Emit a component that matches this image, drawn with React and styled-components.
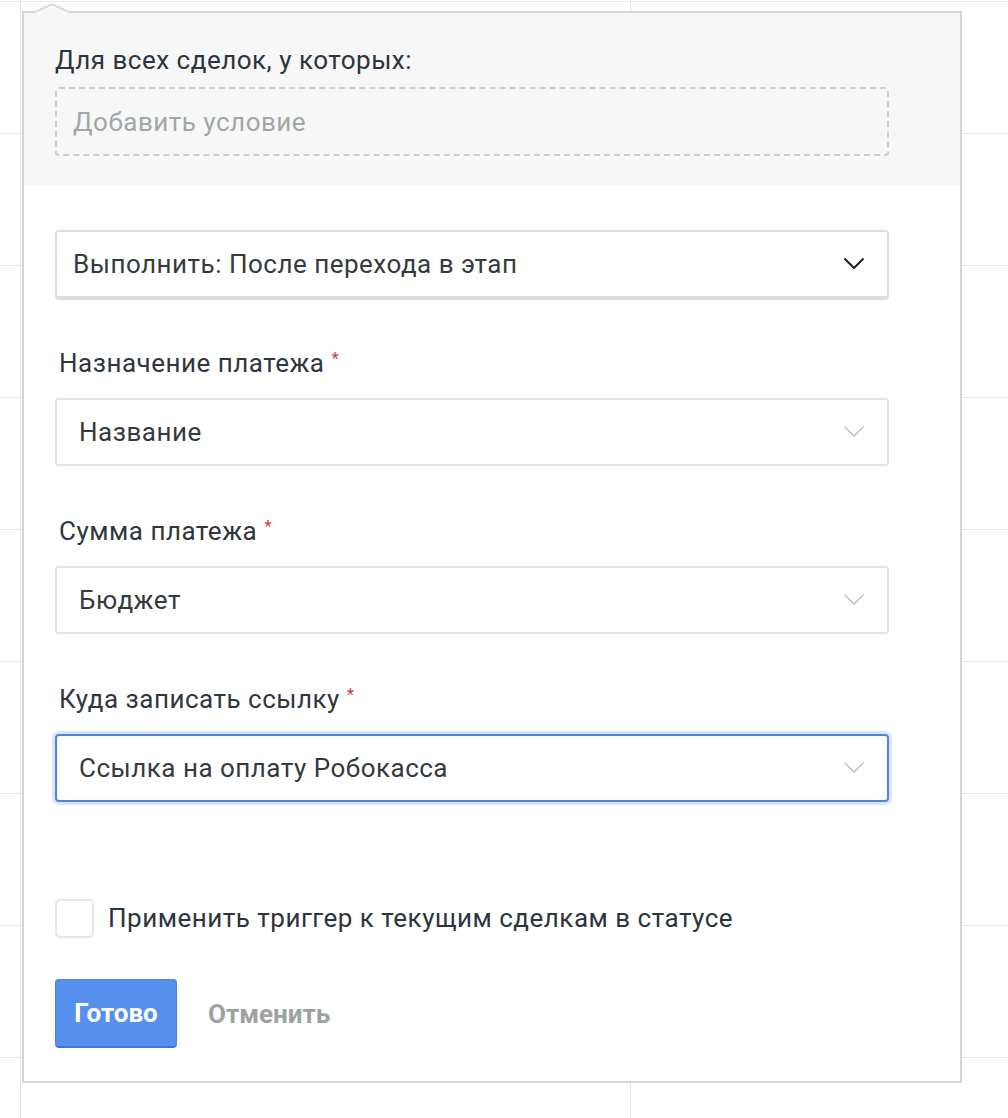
import React from 'react';
import styled, { createGlobalStyle } from 'styled-components';

const GlobalStyle = createGlobalStyle`
  html, body {
    margin: 0;
    padding: 0;
    background: #ffffff;
  }
  body {
    font-family: Roboto, "Noto Sans", sans-serif;
    color: #2f363e;
  }
`;

const Page = styled.div`
  position: relative;
  width: 1008px;
  height: 1118px;
  overflow: hidden;
`;

const Board = styled.div`
  display: grid;
  grid-template-columns: 21px 610px 1fr;
  grid-auto-rows: 132px;
  padding-top: 1px;
`;

const Cell = styled.div`
  border-top: 1px solid #e8e8e8;
  border-right: 1px solid #e4e4e4;

  &:nth-child(3n) {
    border-right: none;
  }
`;

const Popup = styled.div`
  position: absolute;
  left: 22px;
  top: 11px;
  width: 940px;
  box-sizing: border-box;
  border: 2px solid #d2d7d6;
  background: #ffffff;
  letter-spacing: 0.5px;
`;

const Notch = styled.svg`
  position: absolute;
  left: 11px;
  top: -10px;
  display: block;
`;

const Header = styled.div`
  background: #f7f7f7;
  padding: 31px 71px 30px 31px;
`;

const Title = styled.div`
  font-size: 26px;
  line-height: 32px;
  color: #2c343d;
`;

const ConditionBox = styled.div`
  margin-top: 11px;
  height: 69px;
  box-sizing: border-box;
  border: 2px dashed #cdcdcd;
  border-radius: 4px;
  display: flex;
  align-items: center;
  padding-left: 16px;
  font-size: 26px;
  color: #a0a7a8;
`;

const Body = styled.div`
  padding: 44px 71px 33px 31px;
`;

const SelectBox = styled.div`
  height: 68px;
  box-sizing: border-box;
  border: 2px solid ${(p) => (p.$focused ? '#4f82e2' : p.$action ? '#dedede' : '#e2e2e6')};
  border-radius: 4px;
  box-shadow: ${(p) =>
    p.$focused ? '0 0 0 3px #dce7fa' : p.$action ? '0 2px 0 #dedede' : 'none'};
  margin-bottom: ${(p) => (p.$action ? '4px' : '0')};
  display: flex;
  align-items: center;
  justify-content: space-between;
  padding: 0 22px 0 ${(p) => (p.$action ? '16px' : '22px')};
  font-size: 26px;
  color: #343a40;
  background: #ffffff;
`;

const Field = styled.div`
  margin-top: 49px;
`;

const Label = styled.div`
  font-size: 26px;
  line-height: 32px;
  padding-left: 4px;
  margin-bottom: 19px;
  color: #2f363e;
`;

const Required = styled.span`
  color: #d23a40;
  font-size: 17px;
  vertical-align: top;
  margin-left: 7px;
  line-height: 22px;
`;

const CheckRow = styled.label`
  margin-top: 96px;
  height: 40px;
  display: flex;
  align-items: center;
  gap: 14px;
  font-size: 26px;
  color: #2c343d;
`;

const CheckBox = styled.span`
  width: 39px;
  height: 39px;
  box-sizing: border-box;
  border: 2px solid #e6e6e6;
  border-radius: 5px;
  background: #ffffff;
`;

const Actions = styled.div`
  margin-top: 41px;
  display: flex;
  align-items: center;
  gap: 31px;
  letter-spacing: 0;
`;

const PrimaryButton = styled.button`
  width: 122px;
  height: 69px;
  box-sizing: border-box;
  border: 1px solid #4d84de;
  border-bottom: 2px solid #4677cc;
  border-radius: 4px;
  background: #568fee;
  color: #ffffff;
  font-family: inherit;
  font-size: 26px;
  font-weight: 700;
  padding: 0;
`;

const TextButton = styled.button`
  border: none;
  background: none;
  padding: 0;
  font-family: inherit;
  font-size: 26px;
  font-weight: 700;
  color: #9ca1a2;
`;

const Chevron = ({ dark }) => (
  <svg width="22" height="14" viewBox="0 0 22 14">
    <polyline
      points="1.5,1.5 11,11 20.5,1.5"
      fill="none"
      stroke={dark ? '#222' : '#c2c6ca'}
      strokeWidth={dark ? 2 : 1.6}
    />
  </svg>
);

const fields = [
  { label: 'Назначение платежа', value: 'Название' },
  { label: 'Сумма платежа', value: 'Бюджет' },
  { label: 'Куда записать ссылку', value: 'Ссылка на оплату Робокасса', focused: true },
];

const App = () => {
  return (
    <Page>
      <GlobalStyle />
      <Board>
        {Array.from({ length: 27 }).map((_, i) => (
          <Cell key={i} />
        ))}
      </Board>
      <Popup>
        <Notch width="34" height="12" viewBox="0 0 34 12">
          <polygon points="0,9 17,1 34,9 34,12 0,12" fill="#f7f7f7" />
          <polyline points="0,9 17,1.2 34,9" fill="none" stroke="#d2d7d6" strokeWidth="1.6" />
        </Notch>
        <Header>
          <Title>Для всех сделок, у которых:</Title>
          <ConditionBox>Добавить условие</ConditionBox>
        </Header>
        <Body>
          <SelectBox $action>
            <span>Выполнить: После перехода в этап</span>
            <Chevron dark />
          </SelectBox>
          {fields.map((f) => (
            <Field key={f.label}>
              <Label>
                {f.label}
                <Required>*</Required>
              </Label>
              <SelectBox $focused={f.focused}>
                <span>{f.value}</span>
                <Chevron />
              </SelectBox>
            </Field>
          ))}
          <CheckRow>
            <CheckBox />
            Применить триггер к текущим сделкам в статусе
          </CheckRow>
          <Actions>
            <PrimaryButton>Готово</PrimaryButton>
            <TextButton>Отменить</TextButton>
          </Actions>
        </Body>
      </Popup>
    </Page>
  );
};

export default App;
